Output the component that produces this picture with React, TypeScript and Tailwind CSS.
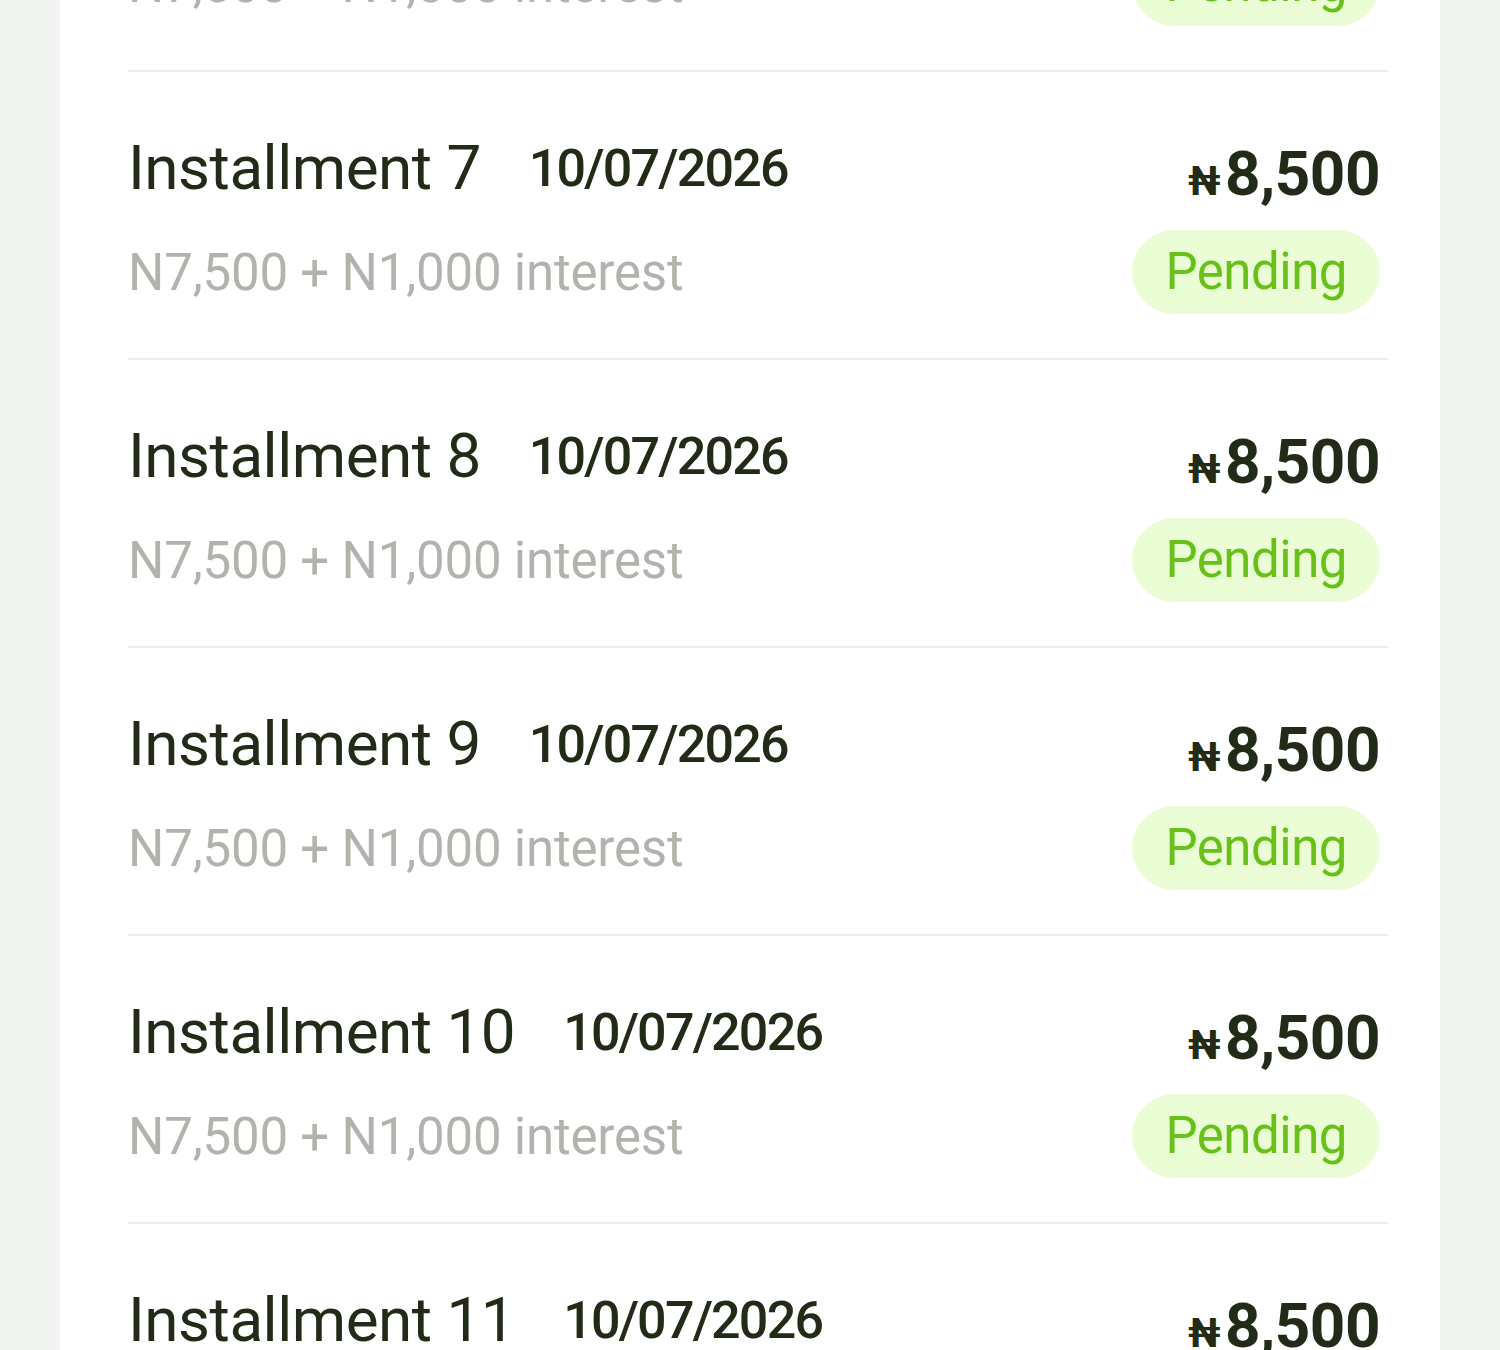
import React from "react";

const rows = [6, 7, 8, 9, 10, 11];

function Row({ n }: { n: number }) {
  return (
    <div className="border-t-2 border-[#ececec] flex justify-between items-start pt-[60px] pb-[44px] pr-[8px]">
      <div className="flex flex-col">
        <div className="flex items-start gap-[48px]">
          <span className="text-[62px] leading-[72px] text-[#222b17] tracking-[-0.5px]">Installment {n}</span>
          <span className="mt-[7px] text-[52px] leading-[60px] font-medium text-[#222b17] tracking-[-1.8px]">10/07/2026</span>
        </div>
        <div className="mt-[39px] text-[51px] leading-[60px] text-[#b1b4ac] tracking-[-0.2px]">N7,500 + N1,000 interest</div>
      </div>
      <div className="flex flex-col items-end mt-[6px]">
        <div className="h-[72px] text-[62px] leading-[72px] font-bold text-[#222b17] tracking-[-0.5px] whitespace-nowrap">
          <span className="text-[40px] leading-none mr-[5px]">₦</span>8,500
        </div>
        <div className="mt-[20px] rounded-full bg-[#ebfdd4] px-[33px] py-[12px] text-[51px] leading-[60px] text-[#67c11a] tracking-[-0.5px]">Pending</div>
      </div>
    </div>
  );
}

export default function App() {
  return (
    <div className="h-[1350px] overflow-hidden bg-[#f2f4f1] px-[60px]" style={{ fontFamily: "Roboto, 'Noto Sans', sans-serif" }}>
      <div className="bg-white -mt-[218px] pl-[68px] pr-[52px]">
        {rows.map((n) => (
          <Row key={n} n={n} />
        ))}
      </div>
    </div>
  );
}
